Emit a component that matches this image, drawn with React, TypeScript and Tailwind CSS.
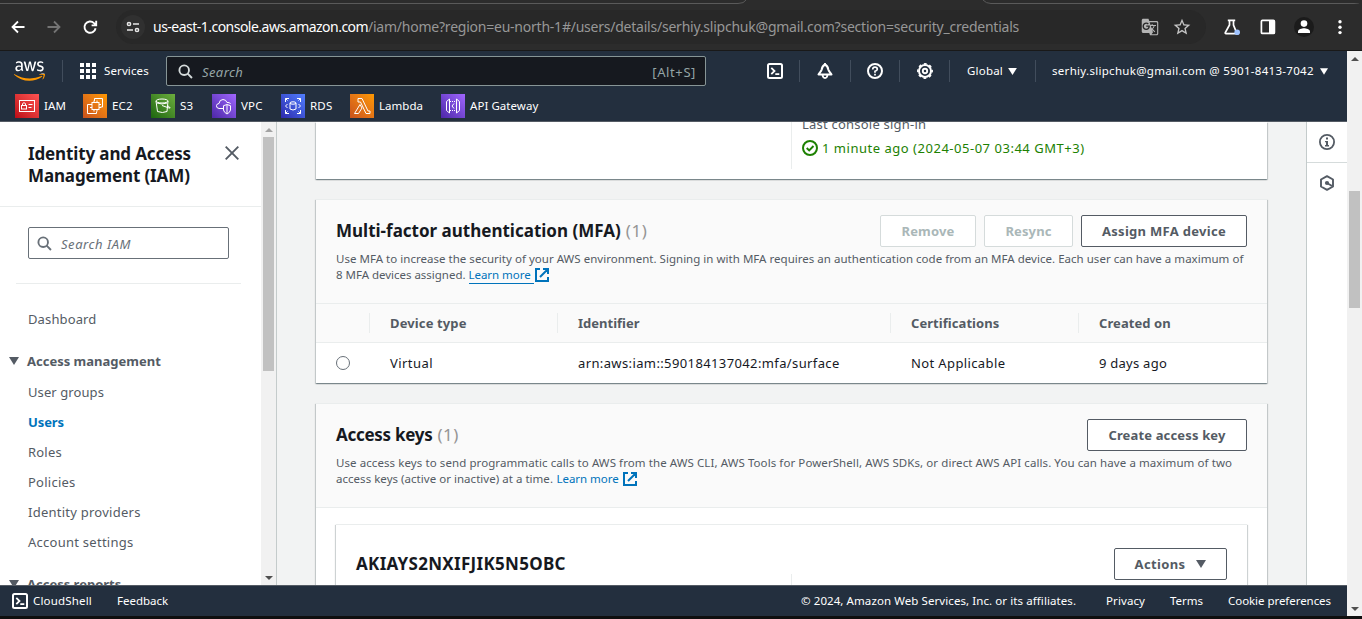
import React from "react";
import { FaAws } from "react-icons/fa";
import { MdGTranslate, MdStarBorder } from "react-icons/md";

type Props = { children?: React.ReactNode; className?: string };

const Svg = ({ children, className = "", box = "0 0 16 16" }: Props & { box?: string }) => (
  <svg viewBox={box} fill="none" className={`block shrink-0 ${className}`}>
    {children}
  </svg>
);

const Caret = ({ className = "" }: Props) => (
  <Svg box="0 0 10 8" className={className}>
    <path d="M0 0h10L5 8z" fill="currentColor" />
  </Svg>
);

const ShellIcon = () => (
  <Svg className="h-4 w-4">
    <rect x="1" y="1" width="14" height="14" rx="1.5" stroke="currentColor" strokeWidth="2" />
    <path d="M4.3 4.8 7.5 8l-3.2 3.2M8.3 11.2h4" stroke="currentColor" strokeWidth="1.8" />
  </Svg>
);

const Lens = ({ className = "" }: Props) => (
  <Svg className={className}>
    <circle cx="6.6" cy="6.6" r="5.1" stroke="currentColor" strokeWidth="2" />
    <path d="m10.3 10.3 4.6 4.6" stroke="currentColor" strokeWidth="2" />
  </Svg>
);

const External = ({ className = "" }: Props) => (
  <Svg box="0 0 14 14" className={`h-3.5 w-3.5 text-[#0073bb] ${className}`}>
    <path d="M5 1H1v12h12V9M8 1h5v5M13 1 5 9" stroke="currentColor" strokeWidth="2" />
  </Svg>
);

function Toolbar() {
  return (
    <div className="relative flex h-[51px] shrink-0 items-center border-b border-[#191919] bg-[#2c2c2c] pt-1">
      <Svg box="0 0 1362 4" className="absolute left-0 top-0 h-1 w-[1362px]">
        <path d="M0 3.5h738q6 0 8-3.5M983 0q3 3.5 8 3.5h363q5 0 8 2" stroke="#5a5a5a" />
      </Svg>
      <Svg className="ml-[10px] h-4 w-4 text-white">
        <path d="M14.5 8H3M8 2.5 2.5 8 8 13.5" stroke="currentColor" strokeWidth="1.8" />
      </Svg>
      <Svg className="ml-5 h-4 w-4 text-[#747474]">
        <path d="M1.5 8H13M8 2.5 13.5 8 8 13.5" stroke="currentColor" strokeWidth="1.8" />
      </Svg>
      <Svg className="ml-5 h-4 w-4 text-white">
        <path d="M13.6 9.2A5.6 5.6 0 1 1 12 4.1L14 6M14.2 1.8V6.4H9.6" stroke="currentColor" strokeWidth="1.9" />
      </Svg>
      <div className="ml-[18px] flex h-[34px] w-[1090px] items-center rounded-full bg-[#282828] pl-[5px]">
        <div className="flex h-6 w-6 items-center justify-center rounded-full bg-[#303030]">
          <Svg box="0 0 14 12" className="h-3 w-3.5 text-[#e8e8e8]">
            <circle cx="3" cy="3" r="1.6" stroke="currentColor" strokeWidth="1.5" />
            <path d="M7 3h6M1 9h6" stroke="currentColor" strokeWidth="1.7" />
            <circle cx="11" cy="9" r="1.6" stroke="currentColor" strokeWidth="1.5" />
          </Svg>
        </div>
        <div className="ml-2 flex w-[988px] whitespace-nowrap text-[14px] leading-5">
          <span className="w-[215px] tracking-[-0.52px] text-white">us-east-1.console.aws.amazon.com</span>
          <span className="tracking-[-0.23px] text-[#979797]">/iam/home?region=eu-north-1#/users/details/serhiy.slipchuk@gmail.com?section=security_credentials</span>
        </div>
        <MdGTranslate className="h-[18px] w-[18px] text-[#b4b4b4]" />
        <MdStarBorder className="ml-[13px] h-5 w-5 text-[#c4c4c4]" />
      </div>
      <Svg className="ml-[18px] h-4 w-4 text-white">
        <path d="M3.8 1.4h7.4M5.5 1.5V6L1.3 13.6q-.4 1 .7 1H13L9.5 6V1.5" stroke="currentColor" strokeWidth="1.7" />
        <circle cx="13.2" cy="13.2" r="2.8" fill="#a0c3ff" />
      </Svg>
      <Svg className="ml-5 h-4 w-4 text-white">
        <rect x="1.4" y="1.4" width="13" height="13" rx="1" stroke="currentColor" strokeWidth="1.7" />
        <path d="M9 1h5.5v14H9z" fill="currentColor" />
      </Svg>
      <div className="ml-[18px] flex h-5 w-5 items-center justify-center rounded-full bg-[#1b1b1b]">
        <Svg className="h-4 w-4 text-white">
          <circle cx="8" cy="4.6" r="3.3" fill="currentColor" />
          <path d="M2 14v-1.5C2 10 6 9.2 8 9.2s6 .8 6 3.3V14z" fill="currentColor" />
        </Svg>
      </div>
      <Svg className="ml-[18px] h-4 w-4 text-white">
        <circle cx="8" cy="2.8" r="1.7" fill="currentColor" />
        <circle cx="8" cy="8.2" r="1.7" fill="currentColor" />
        <circle cx="8" cy="13.6" r="1.7" fill="currentColor" />
      </Svg>
    </div>
  );
}

const services = [
  {
    name: "IAM", cell: "w-[68px]", text: "tracking-[0.1px]", tile: "from-[#bd0816] to-[#ff5252]",
    art: <><rect x="4.5" y="6.5" width="15" height="11" /><rect x="6.5" y="11.5" width="5" height="3.5" /><path d="M7.5 11.5V9.6q1.5-1.8 3 0v1.9M13.5 10.5h4M13.5 13.5h3" /></>,
  },
  {
    name: "EC2", cell: "w-[68px]", text: "tracking-[0.2px]", tile: "from-[#c8511b] to-[#ff9900]",
    art: <><rect x="9" y="8.5" width="7" height="7" /><path d="M11 6.5v2M14 6.5v2M11 15.5v2M14 15.5v2M7 10.5h2M7 13.5h2M16 10.5h2M16 13.5h2M11.5 7V4.5h8v8.5h-2M8 10.5H4.5v9h9v-2" /></>,
  },
  {
    name: "S3", cell: "w-[61px]", text: "tracking-[0.2px]", tile: "from-[#1b660f] to-[#6cae3e]",
    art: <><ellipse cx="11" cy="7" rx="6" ry="2" /><path d="M5 7l1.5 10.5q5 2 9.500 0L17 7M11 11.5l7 2.500q2 .5.5-1l-2-1.500M6 9q5 2 10 0" /></>,
  },
  {
    name: "VPC", cell: "w-[69px]", text: "tracking-[0.2px]", tile: "from-[#4d27a8] to-[#a166ff]",
    art: <><path d="M11 14.5H7q-3-.5-2.500-3 .5-2 2.500-2 .5-4 4-4 3 0 4 3 3-.5 3.500 1.500" /><path d="M15 10.5l3.500 1.200V16q-.5 2.500-3.500 4-3-1.500-3.500-4v-4.300zM15 11v8.500" /></>,
  },
  {
    name: "RDS", cell: "w-[69px]", text: "tracking-[0.2px]", tile: "from-[#2e27ad] to-[#527fff]",
    art: <><ellipse cx="12" cy="9" rx="3" ry="1.2" /><path d="M9 9v6q3 2 6 0V9M4.5 8V4.5H8M4.5 4.5l2 2M16 4.5h3.5V8M19.5 4.5l-2 2M4.5 16v3.5H8M4.5 19.5l2-2M16 19.5h3.5V16M19.5 19.5l-2-2M6.5 10l-2 2 2 2M17.5 10l2 2-2 2" /></>,
  },
  {
    name: "Lambda", cell: "w-[91px]", text: "tracking-[0.02px]", tile: "from-[#c8511b] to-[#ff9900]",
    art: <path d="M8 4.5h4l6 12.500h2v2.500h-4L10.500 8H8zM10 10.500l2 3.500-3.500 5.500H4.500z" />,
  },
  {
    name: "API Gateway", cell: "w-[120px]", text: "tracking-[0.05px]", tile: "from-[#4d27a8] to-[#a166ff]",
    art: <><path d="M5.5 7.5l3-2.500v14l-3-2.500zM18.500 7.500l-3-2.500v14l3-2.500zM13 9.500l-2 2.500 2 2.500" /><path d="M9 7.5h6M9 16.5h6" strokeDasharray="1 1" /></>,
  },
];

const Divider = ({ className = "" }: Props) => <div className={`h-[22px] w-px shrink-0 bg-[#414d5c] ${className}`} />;

function Header() {
  return (
    <header className="h-[71px] shrink-0 border-b border-[#545b64] bg-[#232f3e] text-[11.5px] text-white">
      <div className="flex h-10 items-center whitespace-nowrap">
        <svg className="absolute h-0 w-0">
          <linearGradient id="brand" x1="0" y1="0" x2="0" y2="1">
            <stop offset=".65" stopColor="#fff" />
            <stop offset=".65" stopColor="#f90" />
          </linearGradient>
        </svg>
        <FaAws className="ml-3.5 h-[26px] w-[31px]" fill="url(#brand)" preserveAspectRatio="none" />
        <Divider className="ml-[17px]" />
        <Svg className="ml-[17px] h-4 w-4">
          <path d="M0 2h16M0 8h16M0 14h16" stroke="currentColor" strokeWidth="4" strokeDasharray="4 2" />
        </Svg>
        <span className="ml-2 w-[62px] tracking-[0.12px]">Services</span>
        <div className="flex h-[30px] w-[540px] items-center rounded-[2px] border border-[#879596] bg-[#16191f] pl-[11px] pr-[9px] text-[13px] text-[#95a5a6]">
          <Lens className="h-[15px] w-[15px] text-[#d5dbdb]" />
          <span className="ml-[9px] grow pt-[3px] italic tracking-[0.4px]">Search</span>
          <span className="pt-[3px] tracking-[0.6px]">[Alt+S]</span>
        </div>
        <div className="ml-[61px]"><ShellIcon /></div>
        <Divider className="ml-4" />
        <Svg className="ml-[17px] h-4 w-4">
          <path d="M8 1.5C6 2.500 5 4.500 4.700 6.500 4.400 8 2.800 9.500 1.500 11.500h13C13.200 9.500 11.600 8 11.300 6.500 11 4.500 10 2.500 8 1.500z" stroke="currentColor" strokeWidth="2" strokeLinejoin="round" />
          <path d="M8 0v2M5.5 11.5q.3 3.500 2.500 3.500t2.500-3.500" stroke="currentColor" strokeWidth="1.8" />
        </Svg>
        <Divider className="ml-[17px]" />
        <Svg className="ml-4 h-4 w-4">
          <circle cx="8" cy="8" r="7" stroke="currentColor" strokeWidth="2" />
          <path d="M5.7 6.5Q5.800 4.200 8 4.200t2.300 2Q10.300 7.400 8 8.300v1.500M8 10.800v1.700" stroke="currentColor" strokeWidth="1.7" />
        </Svg>
        <Divider className="ml-4" />
        <Svg className="ml-[17px] h-4 w-4">
          <circle cx="8" cy="8" r="6" stroke="currentColor" strokeWidth="2" />
          <circle cx="8" cy="8" r="7.2" stroke="currentColor" strokeWidth="1.5" strokeDasharray="2.83 2.83" strokeDashoffset="1.4" />
          <circle cx="8" cy="8" r="2.2" stroke="currentColor" strokeWidth="1.9" />
        </Svg>
        <Divider className="ml-4" />
        <span className="ml-[17px] w-[41px] tracking-[0.2px]">Global</span>
        <Caret className="h-[7px] w-[9px]" />
        <Divider className="ml-[18px]" />
        <span className="ml-4 w-[268px] tracking-[0.3px]">serhiy.slipchuk@gmail.com @ 5901-8413-7042</span>
        <Caret className="h-[7px] w-[8px]" />
      </div>
      <div className="flex h-[30px] items-center pl-[15px]">
        {services.map((s) => (
          <div key={s.name} className={`flex shrink-0 items-center ${s.cell}`}>
            <div className={`h-6 w-6 bg-linear-to-tr ${s.tile}`}>
              <Svg box="0 0 24 24" className="h-6 w-6">
                <g stroke="#fff" strokeWidth="1">{s.art}</g>
              </Svg>
            </div>
            <span className={`ml-[5px] whitespace-nowrap ${s.text}`}>{s.name}</span>
          </div>
        ))}
      </div>
    </header>
  );
}

function ScrollBar({ thumb, dim, className = "" }: { thumb: string; dim?: boolean; className?: string }) {
  return (
    <div className={`flex w-[15px] shrink-0 flex-col items-center bg-[#f1f1f1] ${className}`}>
      <div className="flex h-[15px] items-center">
        <Svg box="0 0 8 4" className={`h-1 w-2 ${dim ? "text-[#a3a3a3]" : "text-[#505050]"}`}><path d="M0 4h8L4 0z" fill="currentColor" /></Svg>
      </div>
      <div className="flex grow flex-col"><div className={`w-[11px] bg-[#c1c1c1] ${thumb}`} /></div>
      <div className="flex h-[15px] items-center">
        <Svg box="0 0 8 4" className="h-1 w-2 text-[#505050]"><path d="M0 0h8L4 4z" fill="currentColor" /></Svg>
      </div>
    </div>
  );
}

const links = [
  { label: "User groups", cls: "tracking-[0.09px]" },
  { label: "Users", cls: "font-bold text-[#0073bb] tracking-[-0.1px]" },
  { label: "Roles", cls: "tracking-[0.2px]" },
  { label: "Policies", cls: "tracking-[0.25px]" },
  { label: "Identity providers", cls: "tracking-[0.25px]" },
  { label: "Account settings", cls: "tracking-[0.26px]" },
];

function Sidebar() {
  return (
    <aside className="flex w-[277px] shrink-0 overflow-hidden border-r border-[#c4cbcb] bg-white">
      <nav className="h-[463px] w-[261px] shrink-0 overflow-hidden text-[13px] leading-[22px] text-[#545b64]">
        <div className="flex h-[85px] items-start border-b border-[#eaeded] pl-7 pt-5">
          <h2 className="w-[197px] pt-px text-[17px] font-bold leading-[22px] text-[#16191f]">
            <div className="tracking-[-0.13px]">Identity and Access</div>
            <div className="tracking-[-0.13px]">Management (IAM)</div>
          </h2>
          <Svg box="0 0 14 14" className="mt-1 h-3.5 w-3.5"><path d="M.7.7l12.600 12.600M13.300.7.7 13.300" stroke="currentColor" strokeWidth="1.9" /></Svg>
        </div>
        <div className="ml-7 mt-5 flex h-8 w-[201px] items-center rounded-[2px] border border-[#687078] pl-2 text-[#687078]">
          <Lens className="h-[15px] w-[15px]" />
          <span className="ml-[9px] pt-0.5 italic tracking-[0.55px]">Search IAM</span>
        </div>
        <div className="ml-4 mt-6 h-px w-[225px] bg-[#eaeded]" />
        <div className="ml-7 mt-6 tracking-[0.13px]">Dashboard</div>
        <div className="ml-[9px] mt-5 flex items-center font-bold">
          <Caret className="h-2 w-2.5" />
          <span className="ml-2">Access management</span>
        </div>
        <div className="ml-7 mt-[5px] flex flex-col">
          {links.map((l) => <div key={l.label} className="flex h-[30px] items-center"><span className={l.cls}>{l.label}</span></div>)}
        </div>
        <div className="ml-[9px] mt-4 flex items-center font-bold">
          <Caret className="h-2 w-2.5" />
          <span className="ml-2">Access reports</span>
        </div>
      </nav>
      <ScrollBar thumb="h-[234px]" dim />
    </aside>
  );
}

const cardShadow = "shadow-[0_1px_1px_0_rgba(0,28,36,0.3),1px_1px_1px_0_rgba(0,28,36,0.15),-1px_1px_1px_0_rgba(0,28,36,0.15)]";

const Button = ({ children, className = "", disabled }: Props & { disabled?: boolean }) => (
  <button className={`flex h-8 shrink-0 items-center justify-center whitespace-nowrap rounded-[2px] border bg-white text-[13px] font-bold ${disabled ? "border-[#d5dbdb] text-[#aab7b8]" : "border-[#545b64] text-[#545b64]"} ${className}`}>
    {children}
  </button>
);

const Column = ({ children, className = "" }: Props) => (
  <div className={`flex h-5 items-center border-l border-[#eaeded] pl-5 ${className}`}>{children}</div>
);

function Main() {
  return (
    <main className="h-[463px] w-[1029px] shrink-0 overflow-hidden bg-[#f2f3f3] pl-[39px] text-[13px] leading-[22px] text-[#16191f]">
      <section className={`flex h-[57px] w-[951px] bg-white ${cardShadow}`}>
        <div className="ml-[475px] h-[47px] border-l border-[#eaeded] pl-[10px]">
          <div className="-mt-[9px] tracking-[0.22px] text-[#545b64]">Last console sign-in</div>
          <div className="mt-0.5 flex items-center text-[#1d8102]">
            <Svg className="h-4 w-4">
              <circle cx="8" cy="8" r="7" stroke="currentColor" strokeWidth="2" />
              <path d="m4.7 8 2.500 2.500 4.300-4.500" stroke="currentColor" strokeWidth="1.9" />
            </Svg>
            <span className="ml-1 tracking-[0.52px]">1 minute ago (2024-05-07 03:44 GMT+3)</span>
          </div>
        </div>
      </section>

      <section className={`mt-5 h-[184px] w-[951px] border-t border-[#eaeded] bg-white ${cardShadow}`}>
        <div className="h-[104px] border-b border-[#eaeded] bg-[#fafafa] px-5 pt-[15px]">
          <div className="flex items-center">
            <h2 className="grow whitespace-nowrap text-[17px]">
              <b>Multi-factor authentication (MFA)</b><span className="ml-[5px] tracking-[0.6px] text-[#959595]">(1)</span>
            </h2>
            <Button disabled className="w-24 tracking-[0.16px]">Remove</Button>
            <Button disabled className="ml-2 w-[89px] tracking-[0.13px]">Resync</Button>
            <Button className="ml-2 w-[166px] tracking-[0.3px]">Assign MFA device</Button>
          </div>
          <div className="mt-1 whitespace-nowrap text-[11.5px] leading-4 text-[#545b64]">
            <div className="tracking-[0.025px]">Use MFA to increase the security of your AWS environment. Signing in with MFA requires an authentication code from an MFA device. Each user can have a maximum of</div>
            <div className="flex">
              <span className="w-[132.5px] tracking-[-0.02px]">8 MFA devices assigned.</span>
              <a className="h-[17px] w-[65px] border-b border-[#0073bb] tracking-[-0.04px] text-[#0073bb]">Learn more</a>
              <External className="ml-[1.5px] mt-px" />
            </div>
          </div>
        </div>
        <div className="flex h-[39px] items-center border-b border-[#eaeded] bg-[#fafafa] pl-[53px] font-bold text-[#545b64]">
          <Column className="w-[188px] tracking-[0.12px]">Device type</Column>
          <Column className="w-[333px]">Identifier</Column>
          <Column className="w-[188px] tracking-[0.06px]">Certifications</Column>
          <Column className="tracking-[0.08px]">Created on</Column>
        </div>
        <div className="flex h-10 items-center pl-5">
          <div className="h-3.5 w-3.5 rounded-full border border-[#687078] bg-white" />
          <span className="ml-10 w-[188px] tracking-[0.45px]">Virtual</span>
          <span className="w-[333px] tracking-[0.38px]">arn:aws:iam::590184137042:mfa/surface</span>
          <span className="w-[188px] tracking-[0.38px]">Not Applicable</span>
          <span className="tracking-[0.25px]">9 days ago</span>
        </div>
      </section>

      <section className={`mt-5 h-[300px] w-[951px] border-t border-[#eaeded] bg-white ${cardShadow}`}>
        <div className="h-[104px] border-b border-[#eaeded] bg-[#fafafa] px-5 pt-[15px]">
          <div className="flex items-center">
            <h2 className="grow whitespace-nowrap text-[17px]">
              <b className="tracking-[-0.28px]">Access keys</b><span className="ml-[5px] tracking-[0.5px] text-[#959595]">(1)</span>
            </h2>
            <Button className="w-40 tracking-[0.15px]">Create access key</Button>
          </div>
          <div className="mt-1 whitespace-nowrap text-[11.5px] leading-4 text-[#545b64]">
            <div className="tracking-[0.083px]">Use access keys to send programmatic calls to AWS from the AWS CLI, AWS Tools for PowerShell, AWS SDKs, or direct AWS API calls. You can have a maximum of two</div>
            <div className="flex">
              <span className="w-[220.5px] tracking-[0.03px]">access keys (active or inactive) at a time.</span>
              <a className="w-[65px] tracking-[-0.04px] text-[#0073bb]">Learn more</a>
              <External className="ml-[1.5px] mt-px" />
            </div>
          </div>
        </div>
        <div className={`ml-5 mt-4 h-[200px] w-[911px] border-t border-[#eaeded] bg-white pl-5 pr-[20px] pt-[23px] ${cardShadow}`}>
          <div className="flex items-center">
            <h3 className="grow text-[17px] font-bold tracking-[0.3px]">AKIAYS2NXIFJIK5N5OBC</h3>
            <Button className="w-[113px] tracking-[0.37px]">Actions <Caret className="ml-[11px] h-2 w-2.5" /></Button>
          </div>
          <div className="ml-[435px] -mt-1.5 h-10 w-px bg-[#eaeded]" />
        </div>
      </section>
    </main>
  );
}

function ToolRail() {
  return (
    <div className="flex w-[41px] shrink-0 flex-col border-l border-[#c4cbcb] bg-white text-[#545b64]">
      <div className="flex h-[41px] items-center justify-center border-b border-[#d5dbdb]">
        <Svg className="h-4 w-4">
          <circle cx="8" cy="8" r="7.1" stroke="currentColor" strokeWidth="1.8" />
          <path d="M7 3.5h2v2H7zM6 7h3v4h1v1.500H6V11h1V8.300H6z" fill="currentColor" />
        </Svg>
      </div>
      <div className="flex h-10 items-center justify-center">
        <Svg className="h-4 w-4">
          <path d="M8 1.1 14 4.500v7L8 14.900 2 11.500v-7z" stroke="currentColor" strokeWidth="1.9" strokeLinejoin="round" />
          <circle cx="8" cy="8" r="2.1" fill="currentColor" />
          <path d="m8 8 5.500 3.300" stroke="currentColor" strokeWidth="1.8" />
        </Svg>
      </div>
    </div>
  );
}

function Footer() {
  return (
    <footer className="flex h-[31px] shrink-0 items-center whitespace-nowrap border-t border-[#545b64] bg-[#232f3e] pl-3 text-[11.5px] text-white">
      <ShellIcon />
      <span className="ml-[5px] w-[84px] tracking-[0.18px]">CloudShell</span>
      <span className="w-[684px]">Feedback</span>
      <span className="w-[305px] tracking-[0.083px]">© 2024, Amazon Web Services, Inc. or its affiliates.</span>
      <span className="w-[64px] tracking-[0.1px]">Privacy</span>
      <span className="w-[58px]">Terms</span>
      <span className="tracking-[-0.05px]">Cookie preferences</span>
    </footer>
  );
}

export default function App() {
  return (
    <div className="flex h-[619px] w-[1362px] flex-col overflow-hidden bg-[#0f0f0f] font-['Noto_Sans',sans-serif]">
      <Toolbar />
      <div className="flex h-[565px] shrink-0">
        <div className="flex w-[1347px] shrink-0 flex-col">
          <Header />
          <div className="flex h-[463px] shrink-0">
            <Sidebar />
            <Main />
            <ToolRail />
          </div>
          <Footer />
        </div>
        <ScrollBar thumb="mt-[125px] h-[117px]" />
      </div>
    </div>
  );
}
